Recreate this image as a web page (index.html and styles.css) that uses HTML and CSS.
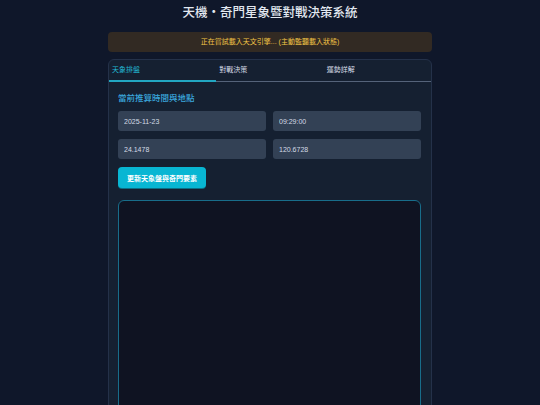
FILE: index.html
```html
<!DOCTYPE html>
<html lang="zh-Hant">
<head>
<meta charset="utf-8">
<title>天機・奇門星象暨對戰決策系統</title>
<link rel="stylesheet" href="styles.css">
</head>
<body>
<div class="page">
  <h1 class="title">天機・奇門星象暨對戰決策系統</h1>
  <div class="alert">正在嘗試載入天文引擎... (主動監聽載入狀態)</div>
  <div class="card">
    <div class="tabs">
      <div class="tab active">天象排盤</div>
      <div class="tab">對戰決策</div>
      <div class="tab">運勢詳解</div>
    </div>
    <div class="panel">
      <h2 class="heading">當前推算時間與地點</h2>
      <div class="grid">
        <input class="field" type="text" value="2025-11-23">
        <input class="field" type="text" value="09:29:00">
        <input class="field" type="text" value="24.1478">
        <input class="field" type="text" value="120.6728">
      </div>
      <button class="btn" type="button">更新天象盤與奇門要素</button>
      <div class="chart"></div>
    </div>
  </div>
</div>
</body>
</html>
```

FILE: styles.css
```css
html, body {
  margin: 0;
  padding: 0;
  background: #0f172a;
  height: 100%;
  overflow: hidden;
}
body {
  font-family: "Liberation Sans", "Noto Sans CJK TC", sans-serif;
  color: #e2e8f0;
}
.page {
  width: 324px;
  margin: 0 auto;
}
.title {
  margin: 0;
  padding-top: 4px;
  height: 28px;
  line-height: 19px;
  font-size: 12.5px;
  font-weight: 500;
  text-align: center;
  color: #e2e8f0;
}
.alert {
  height: 20px;
  line-height: 20px;
  background: #322a23;
  color: #f3c546;
  font-size: 7px;
  text-align: center;
  border-radius: 4px;
  margin-bottom: 7px;
}
.card {
  background: #152031;
  border: 1px solid #243149;
  border-radius: 6px;
  height: 400px;
}
.tabs {
  display: flex;
  border-bottom: 1px solid #55637a;
  height: 21px;
}
.tab {
  width: 108px;
  box-sizing: border-box;
  padding-left: 3px;
  line-height: 20px;
  font-size: 7px;
  color: #d5dce6;
}
.tab.active {
  color: #22b8d3;
  border-bottom: 2px solid #22a7c2;
  margin-bottom: -1px;
  height: 22px;
  box-sizing: border-box;
}
.panel {
  padding: 10px 10px 0 9px;
}
.heading {
  margin: 0 0 7px 0;
  font-size: 8.5px;
  line-height: 12px;
  font-weight: 500;
  color: #3aa6dc;
}
.grid {
  display: grid;
  grid-template-columns: 1fr 1fr;
  gap: 8px 7px;
}
.field {
  display: block;
  box-sizing: border-box;
  width: 100%;
  height: 20px;
  border: none;
  border-radius: 3px;
  background: #334155;
  color: #d4dbe5;
  font-family: "Liberation Sans", "Noto Sans CJK TC", sans-serif;
  font-size: 7px;
  padding: 0 6px;
  outline: none;
}
.btn {
  display: block;
  margin-top: 8px;
  height: 21px;
  padding: 0 9px;
  border: none;
  border-radius: 4px;
  background: #08b6d3;
  color: #ffffff;
  font-family: "Liberation Sans", "Noto Sans CJK TC", sans-serif;
  font-size: 7px;
  font-weight: 700;
  box-shadow: 0 1px 0 #0a6f86;
}
.chart {
  margin-top: 12px;
  height: 300px;
  background: #0f1322;
  border: 1px solid #186d8a;
  border-radius: 6px;
}
```
